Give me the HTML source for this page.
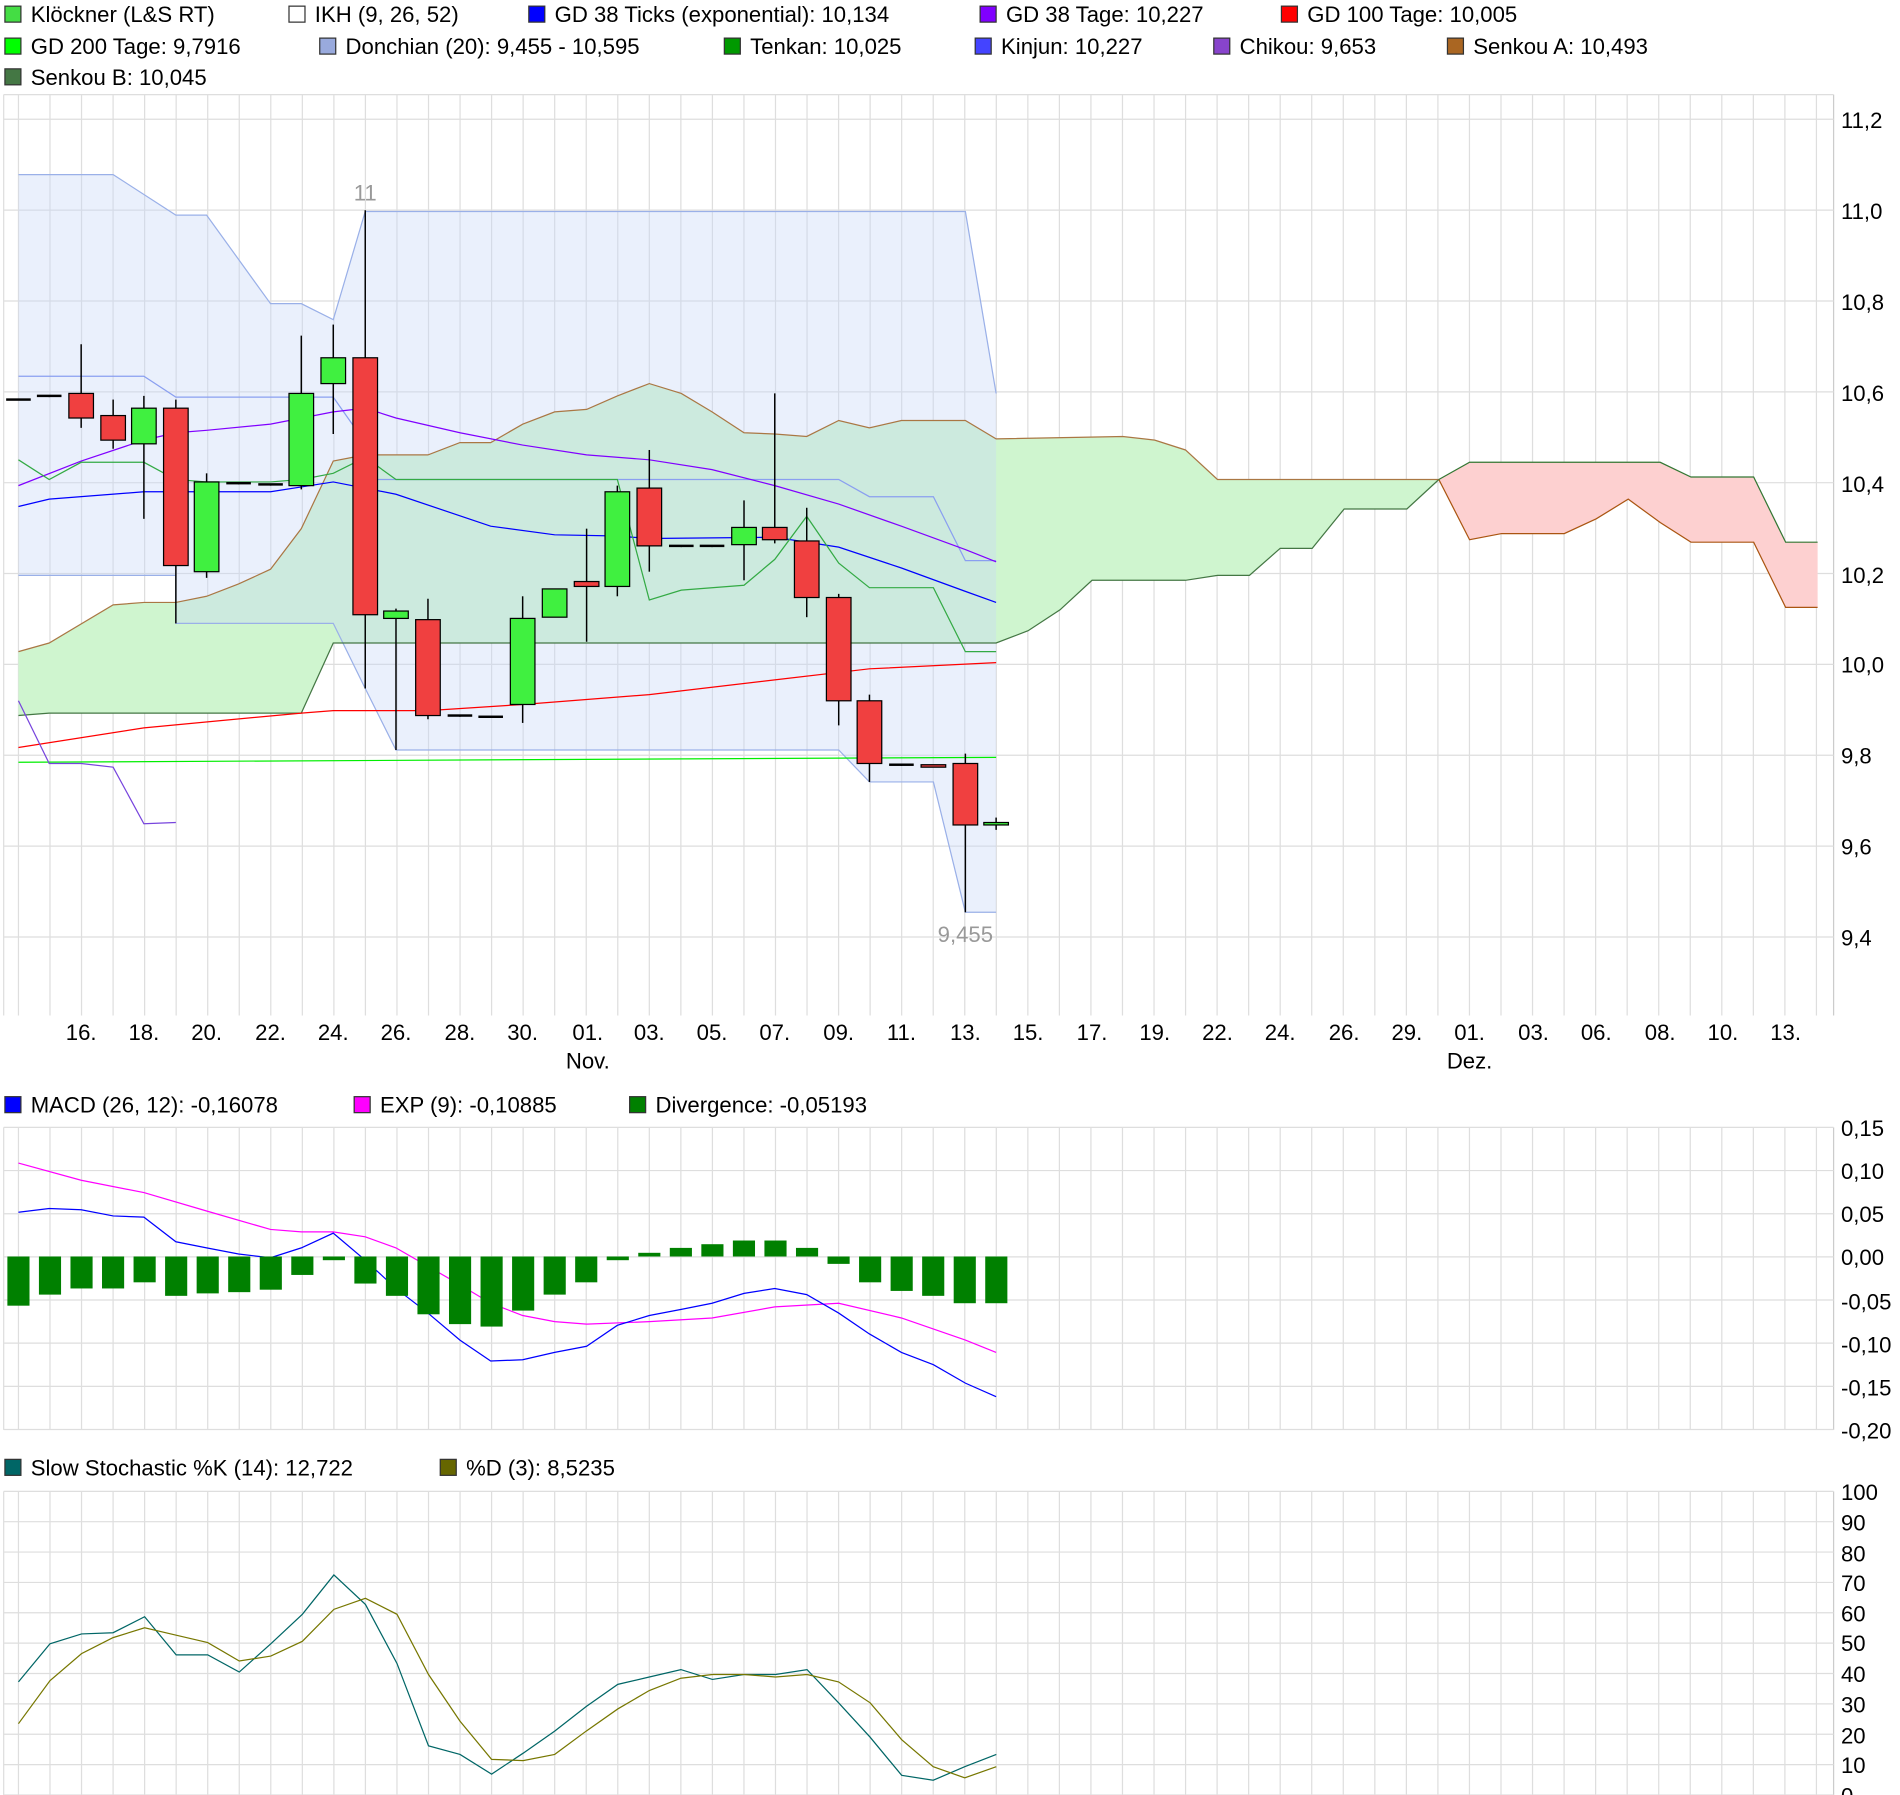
<!DOCTYPE html>
<html><head><meta charset="utf-8"><style>
html,body{margin:0;padding:0;background:#fff;}
svg{display:block;}
text{font-family:"Liberation Sans",Arial,sans-serif;}
</style></head><body>
<svg id="s" width="1900" height="1795" viewBox="0 0 1545 1460" preserveAspectRatio="none" xmlns="http://www.w3.org/2000/svg">
<g id="grid"></g>
<g id="fills"></g>
<g id="lines"></g>
<g id="candles"></g>
<g font-size="18" fill="#000">
<rect x="4" y="5" width="13" height="13" fill="#44dd44" stroke="#333"/><text x="25" y="18">Klöckner (L&amp;S RT)</text>
<rect x="235" y="5" width="13" height="13" fill="#fff" stroke="#333"/><text x="256" y="18">IKH (9, 26, 52)</text>
<rect x="430" y="5" width="13" height="13" fill="#0000ff" stroke="#333"/><text x="451" y="18">GD 38 Ticks (exponential): 10,134</text>
<rect x="797" y="5" width="13" height="13" fill="#8000ff" stroke="#333"/><text x="818" y="18">GD 38 Tage: 10,227</text>
<rect x="1042" y="5" width="13" height="13" fill="#ff0000" stroke="#333"/><text x="1063" y="18">GD 100 Tage: 10,005</text>
<rect x="4" y="31" width="13" height="13" fill="#00ff00" stroke="#333"/><text x="25" y="44">GD 200 Tage: 9,7916</text>
<rect x="260" y="31" width="13" height="13" fill="#99aadd" stroke="#333"/><text x="281" y="44">Donchian (20): 9,455 - 10,595</text>
<rect x="589" y="31" width="13" height="13" fill="#009900" stroke="#333"/><text x="610" y="44">Tenkan: 10,025</text>
<rect x="793" y="31" width="13" height="13" fill="#4444ff" stroke="#333"/><text x="814" y="44">Kinjun: 10,227</text>
<rect x="987" y="31" width="13" height="13" fill="#8844cc" stroke="#333"/><text x="1008" y="44">Chikou: 9,653</text>
<rect x="1177" y="31" width="13" height="13" fill="#aa6622" stroke="#333"/><text x="1198" y="44">Senkou A: 10,493</text>
<rect x="4" y="56" width="13" height="13" fill="#447744" stroke="#333"/><text x="25" y="69">Senkou B: 10,045</text>

<rect x="4" y="892" width="13" height="13" fill="#0000ff" stroke="#333"/><text x="25" y="905">MACD (26, 12): -0,16078</text>
<rect x="288" y="892" width="13" height="13" fill="#ff00ff" stroke="#333"/><text x="309" y="905">EXP (9): -0,10885</text>
<rect x="512" y="892" width="13" height="13" fill="#008000" stroke="#333"/><text x="533" y="905">Divergence: -0,05193</text>

<rect x="4" y="1187" width="13" height="13" fill="#006666" stroke="#333"/><text x="25" y="1200">Slow Stochastic %K (14): 12,722</text>
<rect x="358" y="1187" width="13" height="13" fill="#666600" stroke="#333"/><text x="379" y="1200">%D (3): 8,5235</text>

<text x="1497" y="104">11,2</text><text x="1497" y="178">11,0</text><text x="1497" y="252">10,8</text><text x="1497" y="326">10,6</text><text x="1497" y="400">10,4</text><text x="1497" y="474">10,2</text><text x="1497" y="547">10,0</text><text x="1497" y="621">9,8</text><text x="1497" y="695">9,6</text><text x="1497" y="769">9,4</text>

<g text-anchor="middle">
<text x="66" y="846">16.</text><text x="117" y="846">18.</text><text x="168" y="846">20.</text><text x="220" y="846">22.</text><text x="271" y="846">24.</text><text x="322" y="846">26.</text><text x="374" y="846">28.</text><text x="425" y="846">30.</text><text x="478" y="846">01.</text><text x="528" y="846">03.</text><text x="579" y="846">05.</text><text x="630" y="846">07.</text><text x="682" y="846">09.</text><text x="733" y="846">11.</text><text x="785" y="846">13.</text><text x="836" y="846">15.</text><text x="888" y="846">17.</text><text x="939" y="846">19.</text><text x="990" y="846">22.</text><text x="1041" y="846">24.</text><text x="1093" y="846">26.</text><text x="1144" y="846">29.</text><text x="1195" y="846">01.</text><text x="1247" y="846">03.</text><text x="1298" y="846">06.</text><text x="1350" y="846">08.</text><text x="1401" y="846">10.</text><text x="1452" y="846">13.</text>
<text x="478" y="869">Nov.</text><text x="1195" y="869">Dez.</text>
<text x="297" y="163" fill="#999">11</text><text x="785" y="766" fill="#999">9,455</text>
</g>

<text x="1497" y="924">0,15</text><text x="1497" y="959">0,10</text><text x="1497" y="994">0,05</text><text x="1497" y="1029">0,00</text><text x="1497" y="1065">-0,05</text><text x="1497" y="1100">-0,10</text><text x="1497" y="1135">-0,15</text><text x="1497" y="1170">-0,20</text>

<text x="1497" y="1220">100</text><text x="1497" y="1245">90</text><text x="1497" y="1270">80</text><text x="1497" y="1294">70</text><text x="1497" y="1319">60</text><text x="1497" y="1343">50</text><text x="1497" y="1368">40</text><text x="1497" y="1393">30</text><text x="1497" y="1418">20</text><text x="1497" y="1442">10</text><text x="1497" y="1467">0</text>
</g>
</svg>
<script>
var NS="http://www.w3.org/2000/svg";
function el(p,t,a){var e=document.createElementNS(NS,t);for(var k in a)e.setAttribute(k,a[k]);document.getElementById(p).appendChild(e);return e;}
function pts(a){var s=[];for(var i=0;i<a.length;i+=2)s.push(a[i]+","+a[i+1]);return s.join(" ");}
function line(a,c,w){el("lines","polyline",{points:pts(a),fill:"none",stroke:c,"stroke-width":w||1});}
// grid
var panels=[[77,826],[917,1163],[1213,1460]];
panels.forEach(function(p){
 for(var x=15;x<1491;x+=25.65) el("grid","line",{x1:x,y1:p[0],x2:x,y2:p[1],stroke:"#dedede","stroke-width":1});
 el("grid","line",{x1:3,y1:p[0],x2:3,y2:p[1],stroke:"#dedede"});
 el("grid","line",{x1:1491,y1:p[0],x2:1491,y2:p[1],stroke:"#cccccc"});
});
for(var y=97;y<=800;y+=73.9) el("grid","line",{x1:3,y1:y,x2:1491,y2:y,stroke:"#dedede"});
el("grid","line",{x1:3,y1:77,x2:1491,y2:77,stroke:"#dedede"});
for(var y=917;y<=1164;y+=35.1) el("grid","line",{x1:3,y1:y,x2:1491,y2:y,stroke:"#dedede"});
for(var y=1213;y<=1461;y+=24.7) el("grid","line",{x1:3,y1:y,x2:1491,y2:y,stroke:"#dedede"});
// cloud
var A=[15,530,40,523,92,492,117,490,143,490,168,485,194,475,220,463,245,430,271,375,297,370,348,370,374,360,399,360,425,345,451,335,477,333,502,322,528,312,554,320,579,335,605,352,630,353,656,355,682,342,707,348,733,342,785,342,810,357,913,355,939,358,964,366,990,390,1170,390];
var B=[15,582,40,580,245,580,271,523,810,523,836,513,862,496,888,472,964,472,990,468,1016,468,1041,446,1067,446,1093,414,1144,414,1170,390];
var Br=[];for(var i=B.length-2;i>=0;i-=2)Br.push(B[i],B[i+1]);
el("fills","polygon",{points:pts(A.concat(Br)),fill:"#cff5cf"});
var RA=[1170,390,1195,439,1221,434,1272,434,1298,422,1324,406,1350,425,1375,441,1426,441,1452,494,1478,494];
var RB=[1170,390,1195,376,1350,376,1375,388,1426,388,1452,441,1478,441];
var RAr=[];for(var i=RA.length-2;i>=0;i-=2)RAr.push(RA[i],RA[i+1]);
el("fills","polygon",{points:pts(RB.concat(RAr)),fill:"#fdd0d0"});
// donchian
var DU=[15,142,92,142,143,175,168,175,220,247,245,247,271,260,297,172,785,172,810,320];
var DL=[15,468,143,468,143,507,271,507,297,560,322,610,682,610,707,636,759,636,785,742,810,742];
var DLr=[];for(var i=DL.length-2;i>=0;i-=2)DLr.push(DL[i],DL[i+1]);
el("fills","polygon",{points:pts(DU.concat(DLr)),fill:"#c8d8f8","fill-opacity":"0.38"});
line(DU,"#9ab0e8");line(DL,"#9ab0e8");
line([15,306,117,306,143,323,271,323,297,360],"#8a9ff0");
line([297,390,682,390,707,404,759,404,785,456,810,456],"#8a9ff0");
line(A,"#aa7744");line(B,"#447744");line(RA,"#aa5511");line(RB,"#337733");
line([15,608,117,592,245,580,271,578,348,578,425,573,528,565,630,553,707,544,810,539],"#ff0000");
line([15,620,810,616],"#00ee00");
line([15,395,66,375,117,358,143,352,168,350,220,345,271,335,297,332,322,340,374,352,425,362,477,370,528,374,579,382,630,395,682,410,733,428,785,447,810,457],"#8000ff");
line([15,412,40,406,117,400,143,400,220,400,271,392,322,402,399,428,451,435,502,436,528,438,630,437,682,445,733,462,785,481,810,490],"#0000ff");
line([15,374,40,390,66,376,117,376,143,390,168,392,220,392,245,390,271,385,297,372,322,390,502,390,528,488,554,480,605,476,630,455,656,420,682,458,707,478,759,478,785,530,810,530],"#33aa44");
line([15,570,40,621,66,621,92,624,117,670,143,669],"#7744dd");
// candles [x,o,c,hi,lo]
var C=[[15,325,325,325,325],[40,322,323,322,323],[66,320,340,280,348],[92,338,358,325,365],[117,361,332,322,422],[143,332,460,325,507],[168,465,392,385,470],[194,393,394,393,394],[220,394,395,394,395],[245,395,320,273,398],[271,312,291,264,353],[297,291,500,171,560],[322,503,497,495,610],[348,504,582,487,585],[374,582,583,582,583],[399,583,584,583,584],[425,573,503,485,588],[451,502,479,479,502],[477,473,477,430,522],[502,477,400,395,485],[528,397,444,366,465],[554,444,445,444,445],[579,444,445,444,445],[605,443,429,407,472],[630,429,439,320,442],[656,440,486,413,502],[682,486,570,483,590],[707,570,621,565,636],[733,622,623,622,623],[759,622,624,622,624],[785,621,671,613,742],[810,671,669,665,675]];
C.forEach(function(c){
 var x=c[0],o=c[1],cl=c[2];
 el("candles","line",{x1:x,y1:c[3],x2:x,y2:c[4],stroke:"#000","stroke-width":1.2});
 var top=Math.min(o,cl),h=Math.abs(o-cl);
 if(h<1.5){el("candles","rect",{x:x-10,y:top-1,width:20,height:2,fill:"#000"});}
 else el("candles","rect",{x:x-10,y:top,width:20,height:h,fill:cl<o?"#40f040":"#f04040",stroke:"#000","stroke-width":1});
});
// MACD bars
var M=[1062,1053,1048,1048,1043,1054,1052,1051,1049,1037,1025,1044,1054,1069,1077,1079,1066,1053,1043,1025,1019,1015,1012,1009,1009,1015,1028,1043,1050,1054,1060,1060];
M.forEach(function(v,i){var x=15+i*25.65;var t=Math.min(v,1022),h=Math.abs(v-1022);el("candles","rect",{x:x-9,y:t,width:18,height:Math.max(h,1.5),fill:"#008000"});});
line([15,946,66,960,117,970,168,985,220,1000,245,1002,271,1002,297,1006,322,1015,348,1030,374,1045,399,1060,425,1070,451,1075,477,1077,528,1075,579,1072,630,1063,682,1060,733,1072,785,1090,810,1100],"#ff00ff");
line([15,986,40,983,66,984,92,989,117,990,143,1010,168,1015,194,1020,220,1023,245,1015,271,1003,297,1025,322,1048,348,1068,374,1090,399,1107,425,1106,451,1100,477,1095,502,1078,528,1070,554,1065,579,1060,605,1052,630,1048,656,1053,682,1068,707,1085,733,1100,759,1110,785,1125,810,1136],"#0000ff");
// stochastic
var K=[1368,1337,1329,1328,1315,1346,1346,1360,1337,1313,1281,1305,1353,1420,1427,1443,1426,1408,1388,1370,1364,1358,1366,1362,1362,1358,1385,1413,1444,1448,1437,1427];
var D=[1402,1367,1345,1332,1324,1330,1336,1351,1347,1335,1309,1300,1313,1362,1400,1431,1432,1427,1408,1390,1375,1365,1362,1362,1364,1362,1368,1385,1415,1437,1446,1437];
function ser(a){var r=[];a.forEach(function(v,i){r.push(15+i*25.65,v);});return r;}
line(ser(K),"#006666");line(ser(D),"#777700");
</script>
</body></html>
